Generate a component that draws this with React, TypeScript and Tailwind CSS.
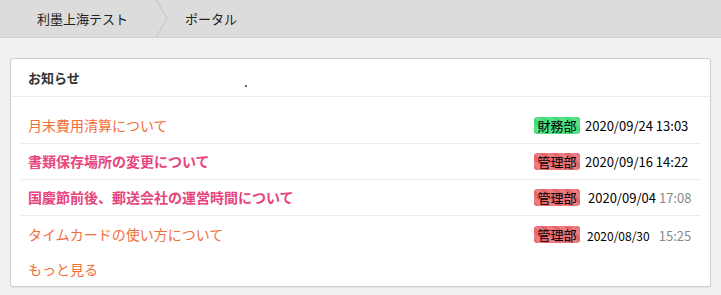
import React from "react";

type Notice = {
  title: string;
  bold: boolean;
  dept: string;
  tone: "green" | "red";
  date: string;
  time: string;
  variant: "plain" | "split" | "small";
};

const notices: Notice[] = [
  { title: "月末費用清算について", bold: false, dept: "財務部", tone: "green", date: "2020/09/24", time: "13:03", variant: "plain" },
  { title: "書類保存場所の変更について", bold: true, dept: "管理部", tone: "red", date: "2020/09/16", time: "14:22", variant: "plain" },
  { title: "国慶節前後、郵送会社の運営時間について", bold: true, dept: "管理部", tone: "red", date: "2020/09/04", time: "17:08", variant: "split" },
  { title: "タイムカードの使い方について", bold: false, dept: "管理部", tone: "red", date: "2020/08/30", time: "15:25", variant: "small" },
];

const stripe =
  "bg-[linear-gradient(45deg,rgba(255,255,255,.15)_25%,transparent_25%,transparent_50%,rgba(255,255,255,.15)_50%,rgba(255,255,255,.15)_75%,transparent_75%,transparent)] bg-[length:12px_12px]";

const Badge = ({ dept, tone }: { dept: string; tone: "green" | "red" }) => (
  <span
    className={`inline-flex h-[17px] w-[46px] items-center justify-center rounded-[3px] text-[13px] leading-none text-black ${stripe} ${
      tone === "green" ? "bg-[#3fdc76]" : "bg-[#e6666b]"
    }`}
  >
    {dept}
  </span>
);

const DateCell = ({ n }: { n: Notice }) => {
  if (n.variant === "split") {
    return (
      <div className="ml-[8px] w-[98px] whitespace-nowrap text-[13px] leading-none">
        <span className="text-black">{n.date}</span>
        <span className="ml-[3px] text-[#8a8a8a]">{n.time}</span>
      </div>
    );
  }
  if (n.variant === "small") {
    return (
      <div className="ml-[7px] w-[99px] whitespace-nowrap leading-none">
        <span className="text-[12px] text-black">{n.date}</span>
        <span className="ml-[9px] text-[13px] text-[#8a8a8a]">{n.time}</span>
      </div>
    );
  }
  return (
    <div className="ml-[5px] w-[101px] whitespace-nowrap text-[13px] leading-none text-black">
      {n.date} {n.time}
    </div>
  );
};

const App = () => {
  return (
    <div className="h-[295px] w-[721px] bg-[#f1f1f1] font-['Noto_Sans_CJK_JP','Noto_Sans',sans-serif]">
      <div className="flex h-[38px] items-stretch border-b border-[#d2d2d2] bg-[#dcdcdc] text-[13px] text-[#222]">
        <div className="flex items-center pl-[37px] pr-[28px]">利墨上海テスト</div>
        <svg width="12" height="37" viewBox="0 0 12 37" className="block">
          <polyline points="0.5,0 11,18.5 0.5,37" fill="none" stroke="#c4c4c4" strokeWidth="1" />
        </svg>
        <div className="flex items-center pl-[17px]">ポータル</div>
      </div>

      <div className="mx-[10px] mt-[20px] rounded-[3px] border border-[#cfcfcf] bg-white shadow-[0_1px_1px_rgba(0,0,0,0.06)]">
        <div className="relative flex h-[38px] items-center border-b border-[#ececec] pl-[17px] text-[13px] font-bold text-[#333]">
          お知らせ
          <span className="absolute left-[234px] top-[26px] h-[2px] w-[2px] rounded-full bg-[#333]" />
        </div>
        <div className="px-[10px] pt-[11px]">
          {notices.map((n, i) => (
            <div
              key={i}
              className={`flex h-[36px] items-center pl-[7px] pr-[14px] ${
                i < notices.length - 1 ? "border-b border-[#ececec]" : ""
              }`}
            >
              <div
                className={`flex-1 text-[14px] ${
                  n.bold ? "font-bold text-[#e8457d]" : "text-[#f26f3b]"
                }`}
              >
                {n.title}
              </div>
              <Badge dept={n.dept} tone={n.tone} />
              <DateCell n={n} />
            </div>
          ))}
          <div className="flex h-[34px] items-center pl-[7px] text-[14px] text-[#f26f3b]">
            もっと見る
          </div>
        </div>
      </div>
    </div>
  );
};

export default App;
